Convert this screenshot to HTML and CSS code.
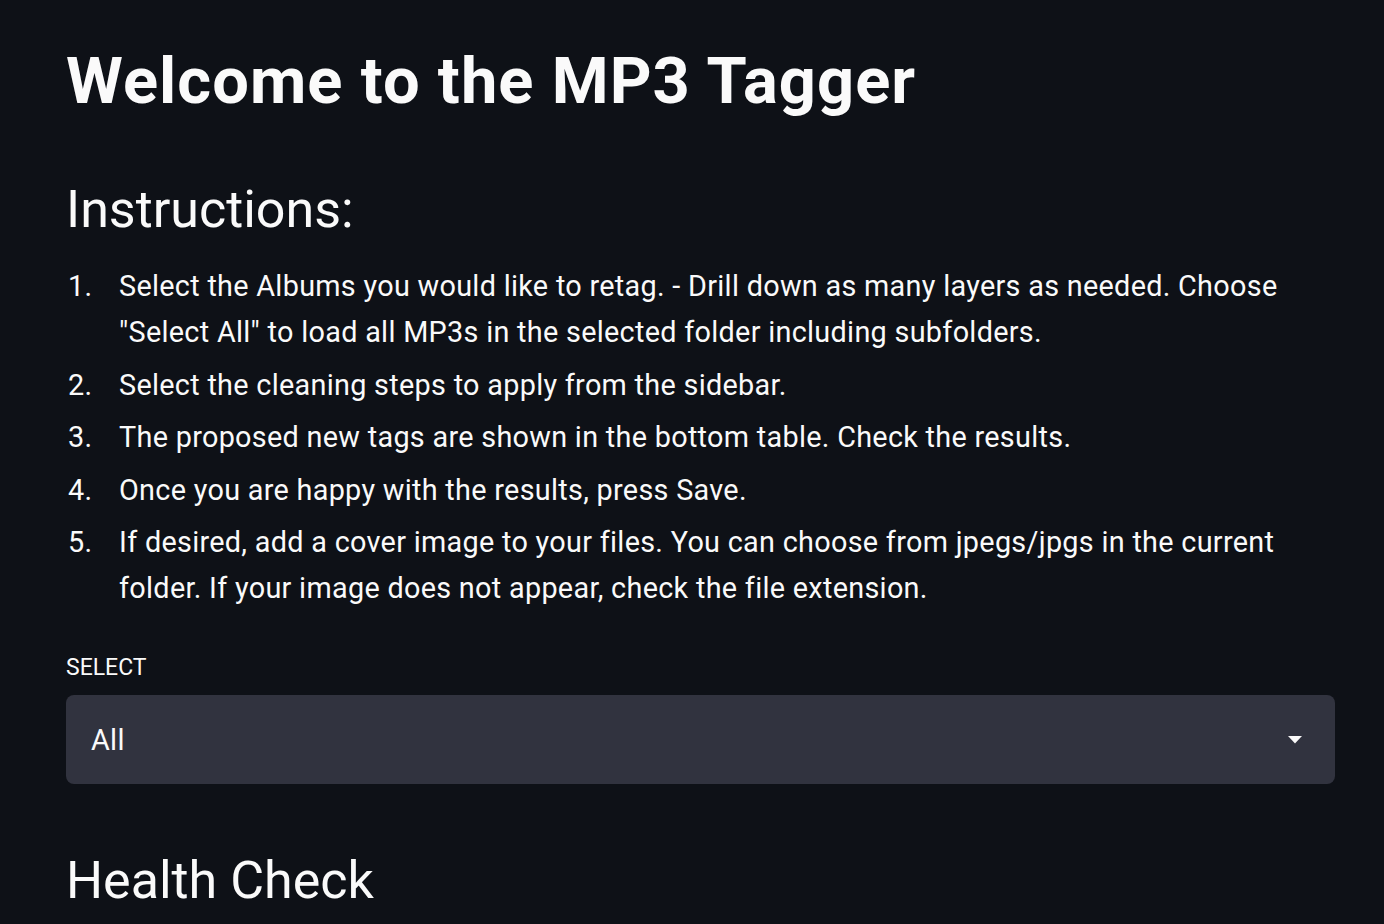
FILE: index.html
```html
<!DOCTYPE html>
<html lang="en">
<head>
<meta charset="utf-8">
<title>MP3 Tagger</title>
<link rel="stylesheet" href="styles.css">
</head>
<body>
<main class="page">
  <h1 class="title">Welcome to the MP3 Tagger</h1>
  <h2 class="subtitle">Instructions:</h2>
  <ol class="steps">
    <li class="step"><span class="num">1.</span><span class="txt">Select the Albums you would like to retag. - Drill down as many layers as needed. Choose "Select All" to load all MP3s in the selected folder including subfolders.</span></li>
    <li class="step"><span class="num">2.</span><span class="txt">Select the cleaning steps to apply from the sidebar.</span></li>
    <li class="step"><span class="num">3.</span><span class="txt">The proposed new tags are shown in the bottom table. Check the results.</span></li>
    <li class="step"><span class="num">4.</span><span class="txt">Once you are happy with the results, press Save.</span></li>
    <li class="step"><span class="num">5.</span><span class="txt">If desired, add a cover image to your files. You can choose from jpegs/jpgs in the current folder. If your image does not appear, check the file extension.</span></li>
  </ol>
  <div class="field">
    <label class="label">SELECT</label>
    <div class="select">
      <span class="value">All</span>
      <svg class="caret" width="14" height="8" viewBox="0 0 14 8"><path d="M0 0 L14 0 L7 7.5 Z" fill="#fafafa"/></svg>
    </div>
  </div>
  <h2 class="subtitle health">Health Check</h2>
</main>
</body>
</html>
```
FILE: styles.css
```css
html, body {
  margin: 0;
  padding: 0;
  background: #0e1117;
  color: #fafafa;
  font-family: Roboto, "Liberation Sans", sans-serif;
  overflow: hidden;
}
.page {
  width: 1269px;
  padding: 0 49px 0 66px;
  height: 924px;
}
.title {
  margin: 0;
  padding-top: 42px;
  font-size: 65px;
  line-height: 78px;
  font-weight: 700;
  letter-spacing: 1.05px;
}
.subtitle {
  margin: 59px 0 0 0;
  font-size: 52px;
  line-height: 62px;
  font-weight: 400;
}
.steps {
  list-style: none;
  margin: 22px 0 0 0;
  padding: 0;
  font-size: 28.8px;
  line-height: 46px;
  letter-spacing: 0.3px;
}
.step {
  display: flex;
  margin-bottom: 6.5px;
}
.num {
  flex: 0 0 53px;
  padding-left: 2px;
  box-sizing: border-box;
}
.txt {
  flex: 1;
}
.field {
  margin-top: 42px;
  display: flex;
  flex-direction: column;
}
.label {
  font-size: 23px;
  line-height: 30px;
  margin-bottom: 12px;
}
.select {
  height: 89px;
  background: #31333f;
  border-radius: 8px;
  display: flex;
  align-items: center;
  justify-content: space-between;
  padding: 0 33px 0 25px;
}
.value {
  font-size: 28.8px;
  letter-spacing: 0.3px;
}
.caret {
  display: block;
}
.health {
  margin-top: 66px;
}
```
